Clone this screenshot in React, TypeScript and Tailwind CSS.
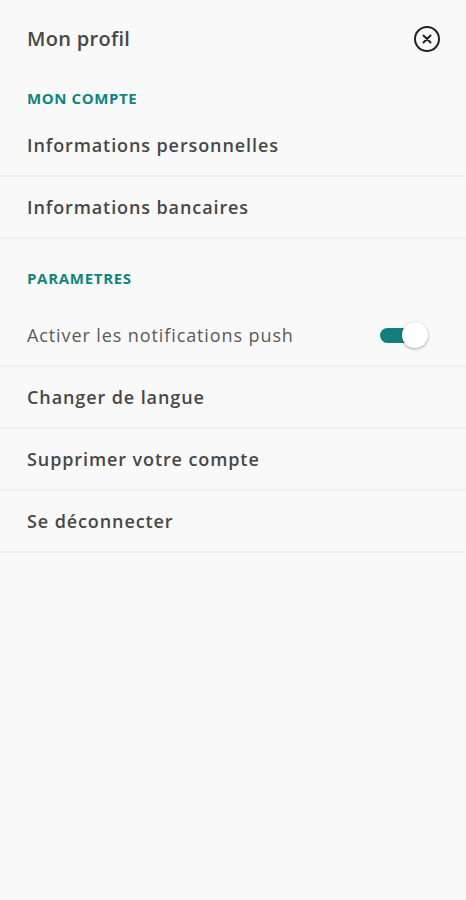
import React, { useState } from 'react';

const font = { fontFamily: '"Open Sans", "Noto Sans", sans-serif' };

const Row: React.FC<{ label: string; children?: React.ReactNode; light?: boolean }> = ({ label, children, light }) => (
  <div className="flex items-center justify-between h-[62px] pl-[27px] pr-[38px] border-b-2 border-[#eeeff0]">
    <span
      className={
        light
          ? 'text-[18px] tracking-[0.9px] text-[#5a5a5a] font-normal'
          : 'text-[18px] tracking-[0.9px] text-[#474747] font-semibold'
      }
    >
      {label}
    </span>
    {children}
  </div>
);

export default function App() {
  const [push, setPush] = useState(true);

  return (
    <div className="w-[466px] h-[900px] bg-[#f9f9fa] overflow-hidden" style={font}>
      <div className="flex items-center justify-between h-[78px] pl-[27px] pr-[26px]">
        <h1 className="text-[20px] tracking-[0.3px] font-semibold text-[#474747]">Mon profil</h1>
        <button className="w-[26px] h-[26px] rounded-full border-2 border-[#222] flex items-center justify-center">
          <svg width="10" height="10" viewBox="0 0 10 10">
            <path d="M1.5 1.5 L8.5 8.5 M8.5 1.5 L1.5 8.5" stroke="#222" strokeWidth="2" strokeLinecap="round" />
          </svg>
        </button>
      </div>

      <div className="px-[27px] h-[37px] pt-[9px] flex items-start">
        <span className="text-[15px] leading-[22px] tracking-[0.6px] font-bold text-[#0f8580]">MON COMPTE</span>
      </div>
      <Row label="Informations personnelles" />
      <Row label="Informations bancaires" />

      <div className="px-[27px] h-[66px] pt-[12px] flex items-center">
        <span className="text-[15px] tracking-[0.7px] font-bold text-[#0f8580]">PARAMETRES</span>
      </div>
      <Row label="Activer les notifications push" light>
        <button onClick={() => setPush(!push)} className="relative w-[48px] h-[26px]">
          <span className="absolute left-0 top-[6px] w-[34px] h-[15px] rounded-full bg-[#137f7b]" />
          <span className="absolute right-0 top-0 w-[26px] h-[26px] rounded-full bg-white shadow-[0_1px_3px_rgba(0,0,0,0.35)]" />
        </button>
      </Row>
      <Row label="Changer de langue" />
      <Row label="Supprimer votre compte" />
      <Row label="Se déconnecter" />
    </div>
  );
}
